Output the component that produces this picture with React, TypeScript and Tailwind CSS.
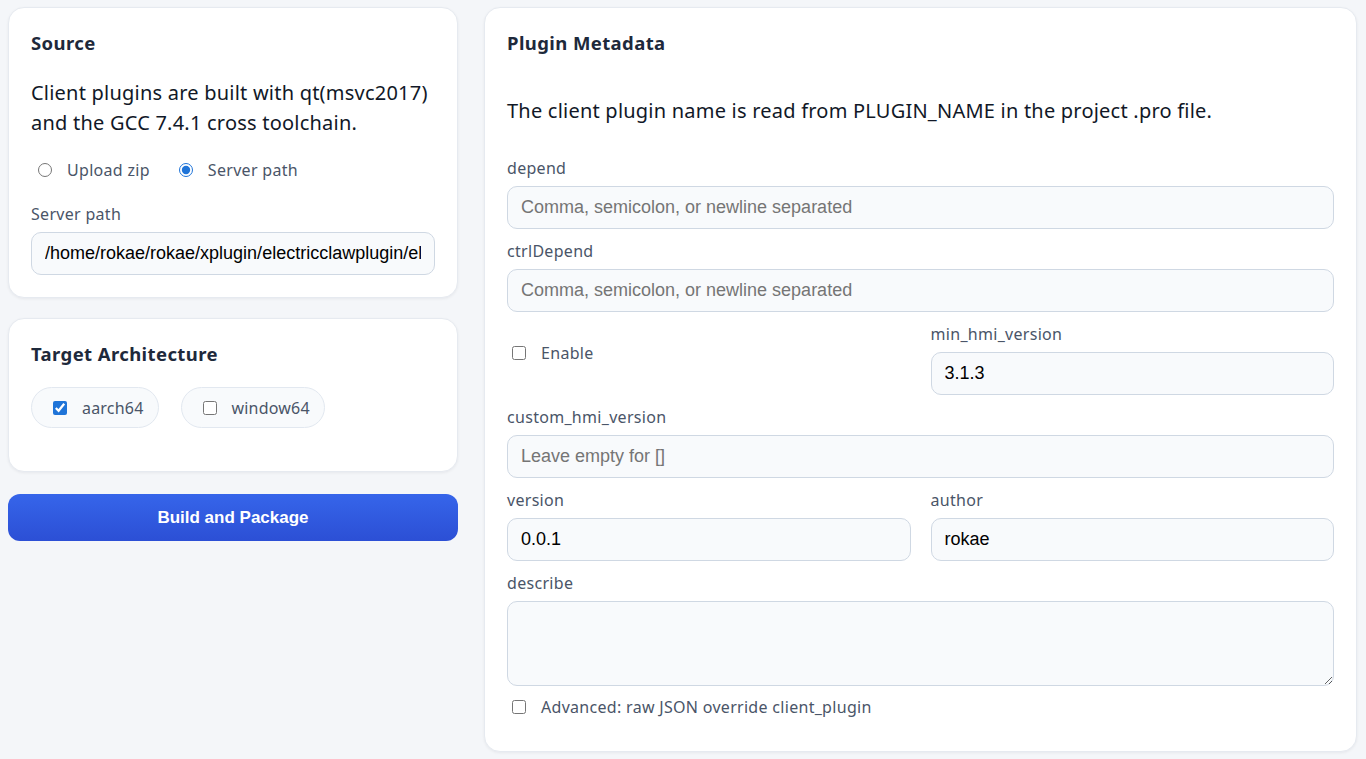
import { useState } from 'react'

const ui = { fontFamily: '"Segoe UI", "Noto Sans", sans-serif' }
const mono = { fontFamily: '"Liberation Sans", Arial, sans-serif' }

const inputCls =
  'block w-full h-[43px] rounded-[10px] border border-[#cfd8e3] bg-[#f8fafc] px-[13px] text-[18px] text-black placeholder:text-[#757575] outline-none'

const boxCls = 'm-0 w-[14px] h-[14px] accent-[#1f74d8]'
const headCls = 'text-[18.5px] font-bold leading-7 tracking-[0.4px] text-[#1e293b]'

function Field({ label, children }: { label: string; children: React.ReactNode }) {
  return (
    <div>
      <label className="block text-base leading-6 tracking-[0.3px] text-[#4a5568] mb-1.5" style={ui}>
        {label}
      </label>
      {children}
    </div>
  )
}

function Card({ children, className = '' }: { children: React.ReactNode; className?: string }) {
  return (
    <section
      className={`bg-white border border-[#e6eaf0] rounded-2xl shadow-[0_1px_3px_rgba(15,23,42,0.06)] px-[22px] pt-[21px] ${className}`}
    >
      {children}
    </section>
  )
}

export default function App() {
  const [mode, setMode] = useState<'zip' | 'path'>('path')
  const [arch, setArch] = useState({ aarch64: true, window64: false })

  return (
    <div className="min-h-screen bg-[#f4f6f9] text-[#111827]" style={ui}>
      <div className="grid grid-cols-[450px_1fr] gap-[26px] pl-2 pr-[9px] pt-[7px] pb-2 items-start">
        {/* Left column */}
        <div className="flex flex-col">
          <Card className="pb-[22px]">
            <h2 className={headCls}>Source</h2>
            <p className="mt-[21px] text-xl leading-[30px] tracking-[0.22px] text-[#111827]">
              Client plugins are built with qt(msvc2017) and the GCC 7.4.1 cross toolchain.
            </p>
            <div className="mt-5 flex items-center gap-[29px] text-base leading-6 tracking-[0.3px] text-[#4a5568]">
              <label className="flex items-center gap-[15px] pl-[7px]">
                <input
                  type="radio"
                  name="src"
                  checked={mode === 'zip'}
                  onChange={() => setMode('zip')}
                  className={boxCls}
                />
                Upload zip
              </label>
              <label className="flex items-center gap-[15px]">
                <input
                  type="radio"
                  name="src"
                  checked={mode === 'path'}
                  onChange={() => setMode('path')}
                  className={boxCls}
                />
                Server path
              </label>
            </div>
            <div className="mt-5">
              <Field label="Server path">
                <input
                  className={inputCls}
                  style={mono}
                  defaultValue="/home/rokae/rokae/xplugin/electricclawplugin/electricclawplugin"
                />
              </Field>
            </div>
          </Card>

          <Card className="mt-5 pb-[43px]">
            <h2 className={headCls}>Target Architecture</h2>
            <div className="mt-[19px] flex gap-[22px]">
              {(['aarch64', 'window64'] as const).map((k) => (
                <label
                  key={k}
                  className="flex items-center gap-[15px] h-[41px] rounded-full border border-[#e2e8f0] bg-[#f8fafc] pl-[21px] pr-[14px] text-base tracking-[0.2px] text-[#4a5568]"
                >
                  <input
                    type="checkbox"
                    checked={arch[k]}
                    onChange={() => setArch({ ...arch, [k]: !arch[k] })}
                    className={boxCls}
                  />
                  {k}
                </label>
              ))}
            </div>
          </Card>

          <button
            className="mt-[22px] h-[47px] w-full rounded-xl bg-gradient-to-b from-[#3665ea] to-[#2c4fd5] text-[17px] font-bold text-white"
            style={mono}
          >
            Build and Package
          </button>
        </div>

        {/* Plugin metadata */}
        <Card className="pb-[32px]">
          <h2 className={headCls}>Plugin Metadata</h2>
          <p className="mt-[39px] text-xl leading-[30px] tracking-[0.22px] text-[#111827]">
            The client plugin name is read from PLUGIN_NAME in the project .pro file.
          </p>

          <div className="mt-[30px] flex flex-col gap-[10px]">
            <Field label="depend">
              <input className={inputCls} style={mono} placeholder="Comma, semicolon, or newline separated" />
            </Field>
            <Field label="ctrlDepend">
              <input className={inputCls} style={mono} placeholder="Comma, semicolon, or newline separated" />
            </Field>

            <div className="grid grid-cols-2 gap-5">
              <div className="pt-[19px]">
                <label className="flex items-center gap-[15px] pl-[5px] text-base leading-6 tracking-[0.3px] text-[#4a5568]">
                  <input type="checkbox" className={boxCls} />
                  Enable
                </label>
              </div>
              <Field label="min_hmi_version">
                <input className={inputCls} style={mono} defaultValue="3.1.3" />
              </Field>
            </div>

            <Field label="custom_hmi_version">
              <input className={inputCls} style={mono} placeholder="Leave empty for []" />
            </Field>

            <div className="grid grid-cols-2 gap-5">
              <Field label="version">
                <input className={inputCls} style={mono} defaultValue="0.0.1" />
              </Field>
              <Field label="author">
                <input className={inputCls} style={mono} defaultValue="rokae" />
              </Field>
            </div>

            <Field label="describe">
              <textarea
                className="mt-px block w-full h-[85px] rounded-[10px] border border-[#cfd8e3] bg-[#f8fafc] px-[13px] py-2 text-[18px] outline-none"
                style={mono}
              />
            </Field>
          </div>

          <label className="mt-[9px] flex items-center gap-[15px] pl-[5px] text-base leading-6 tracking-[0.3px] text-[#4a5568]">
            <input type="checkbox" className={boxCls} />
            Advanced: raw JSON override client_plugin
          </label>
        </Card>
      </div>
    </div>
  )
}
